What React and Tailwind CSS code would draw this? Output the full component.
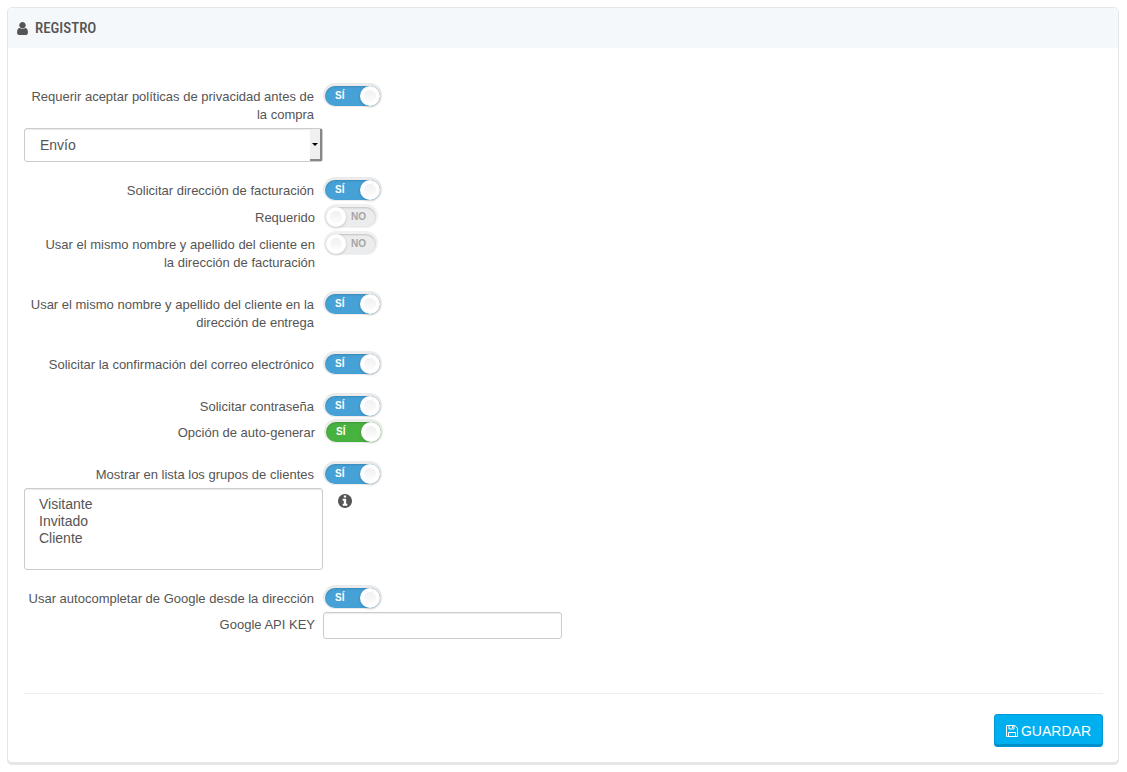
function UserIcon() {
  return (
    <svg viewBox="0 128 1280 1536" className="h-[13px] w-[11px]" fill="currentColor" aria-hidden="true">
      <path d="M1280 1399q0 109-62.5 187t-150.500 78h-854q-88 0-150.500-78t-62.500-187q0-85 8.500-160.500t31.500-152 58.500-131 94-89 134.500-34.500q131 128 313 128t313-128q76 0 134.500 34.500t94 89 58.500 131 31.500 152 8.500 160.500zm-256-887q0 159-112.500 271.500t-271.500 112.500-271.500-112.500-112.500-271.500 112.500-271.500 271.500-112.500 271.500 112.500 112.500 271.500z" />
    </svg>
  );
}

function InfoIcon() {
  return (
    <svg viewBox="128 128 1536 1536" className="mt-1.5 size-3.5" fill="currentColor" aria-hidden="true">
      <path d="M1152 1376v-160q0-14-9-23t-23-9h-96v-512q0-14-9-23t-23-9h-320q-14 0-23 9t-9 23v160q0 14 9 23t23 9h96v320h-96q-14 0-23 9t-9 23v160q0 14 9 23t23 9h448q14 0 23-9t9-23zm-128-896v-160q0-14-9-23t-23-9h-192q-14 0-23 9t-9 23v160q0 14 9 23t23 9h192q14 0 23-9t9-23zm640 416q0 209-103 385.500t-279.500 279.500-385.500 103-385.500-103-279.500-279.500-103-385.500 103-385.500 279.500-279.500 385.500-103 385.500 103 279.500 279.500 103 385.500z" />
    </svg>
  );
}

function SaveIcon() {
  return (
    <svg viewBox="0 0 12 12" className="size-3" fill="none" stroke="currentColor" aria-hidden="true">
      <path d="M.5.5h8.300l2.700 2.700v8.300H.5z" />
      <path d="M3 .5v3.500h5V.5M2.500 11.500v-4h7v4" />
      <path d="M6.500 1v2" />
    </svg>
  );
}

function Knob({ side }) {
  return (
    <span
      className={`absolute top-0 flex size-5 items-center justify-center rounded-full bg-white shadow-[0_1px_3px_rgba(0,0,0,0.18)] ${side}`}
    >
      <span className="size-3 rounded-full bg-linear-to-b from-[#f0f0f0] to-[#fcfcfc]" />
    </span>
  );
}

function Toggle({ id, on, color = "bg-[#45a1d6]" }) {
  if (!on) {
    return (
      <span className="relative flex h-5 w-[50px] items-center justify-end rounded-full bg-[#ebeced] pr-2.5 shadow-[inset_0_1px_2px_rgba(0,0,0,0.18),0_-1px_0_2px_#f1f1f1]">
        <input id={id} type="checkbox" role="switch" className="absolute inset-0 z-10 m-0 h-full w-full opacity-0" />
        <span className="text-[10px] leading-4 font-bold text-[#a5a5a5]">NO</span>
        <Knob side="left-0" />
      </span>
    );
  }
  return (
    <span
      className={`relative flex h-5 w-[55px] items-center rounded-full pl-2.5 shadow-[inset_0_1px_2px_rgba(0,0,0,0.15),0_-1px_0_2px_#ebebeb] ${color}`}
    >
      <input id={id} type="checkbox" role="switch" defaultChecked className="absolute inset-0 z-10 m-0 h-full w-full opacity-0" />
      <span className="text-[10px] leading-4 font-bold text-white">SÍ</span>
      <Knob side="right-0" />
    </span>
  );
}

function SwitchRow({ id, label, sub, on, color }) {
  return (
    <div className="flex items-start">
      <span className={`mr-[11px] flex shrink-0 justify-end ${sub ? "w-[291px]" : "w-[290px]"}`}>
        <label
          htmlFor={id}
          className={`py-1 text-right text-[13px] leading-[18px] ${sub ? "max-w-[275px]" : ""}`}
        >
          {label}
        </label>
      </span>
      <span className="py-[2px]">
        <Toggle id={id} on={on} color={color} />
      </span>
    </div>
  );
}

export default function App() {
  return (
    <main className="p-[7px] pr-2 font-['Liberation_Sans',Arial,sans-serif] text-[#555555]">
      <section className="rounded-[5px] border border-[#e6e6e6] bg-white shadow-[0_2px_0_#e6e6e6]">
        <header className="flex h-10 items-center gap-[7px] rounded-t-[5px] bg-[#f5f8fb] pl-[9px]">
          <UserIcon />
          <h1 className="font-['Liberation_Sans_Narrow','Roboto_Condensed','Open_Sans_Condensed',sans-serif] text-[15px] leading-5 font-medium">
            REGISTRO
          </h1>
        </header>
        <form className="pt-9 pr-[15px] pb-[15px] pl-4" onSubmit={(e) => e.preventDefault()}>
          <div className="flex flex-col gap-4">
            <div>
              <SwitchRow id="privacy" on label="Requerir aceptar políticas de privacidad antes de la compra" />
              <div className="relative w-[299px]">
                <select
                  aria-label="Etapa"
                  className="block h-[34px] w-full appearance-none rounded-[3px] border border-[#cccccc] bg-white pl-[15px] text-sm shadow-[inset_0_1px_1px_rgba(0,0,0,0.08)]"
                >
                  <option>Envío</option>
                </select>
                <span className="pointer-events-none absolute top-px right-px flex h-8 w-3 items-center justify-center border-r-2 border-b-2 border-[#888888] bg-[#f0f0f0]">
                  <svg viewBox="0 0 6 3" className="h-[3px] w-1.5" aria-hidden="true">
                    <path d="M0 0h6L3 3z" fill="#000" />
                  </svg>
                </span>
              </div>
            </div>
            <div className="flex flex-col gap-px">
              <SwitchRow id="billing" on label="Solicitar dirección de facturación" />
              <SwitchRow id="required" sub label="Requerido" />
              <SwitchRow id="same-billing" sub label="Usar el mismo nombre y apellido del cliente en la dirección de facturación" />
            </div>
            <SwitchRow id="same-delivery" on label="Usar el mismo nombre y apellido del cliente en la dirección de entrega" />
            <SwitchRow id="confirm-email" on label="Solicitar la confirmación del correo electrónico" />
            <div>
              <SwitchRow id="password" on label="Solicitar contraseña" />
              <SwitchRow id="autogenerate" sub on color="bg-[#48b23f]" label="Opción de auto-generar" />
            </div>
            <div>
              <SwitchRow id="groups" on label="Mostrar en lista los grupos de clientes" />
              <div className="flex items-start gap-[15px]">
                <select
                  multiple
                  aria-label="Grupos de clientes"
                  className="block h-[82px] w-[299px] overflow-hidden rounded-[3px] border border-[#cccccc] bg-white px-3 py-[7px] text-sm leading-[17px] shadow-[inset_0_1px_1px_rgba(0,0,0,0.08)]"
                >
                  <option className="h-[17px] min-h-0 p-0 px-0.5">Visitante</option>
                  <option className="h-[17px] min-h-0 p-0 px-0.5">Invitado</option>
                  <option className="h-[17px] min-h-0 p-0 px-0.5">Cliente</option>
                </select>
                <InfoIcon />
              </div>
            </div>
            <div>
              <SwitchRow id="google" on label="Usar autocompletar de Google desde la dirección" />
              <div className="flex items-start">
                <label htmlFor="api-key" className="mr-2 w-[291px] shrink-0 py-1 text-right text-[13px] leading-[18px]">
                  Google API KEY
                </label>
                <input
                  id="api-key"
                  type="text"
                  className="h-[27px] w-[239px] rounded-[3px] border border-[#cccccc] bg-white px-2 text-xs shadow-[inset_0_1px_1px_rgba(0,0,0,0.08)]"
                />
              </div>
            </div>
          </div>
          <div className="mt-[54px] flex justify-end border-t border-[#eeeeee] pt-5">
            <button
              type="submit"
              className="flex h-[33px] items-center gap-[3px] rounded-[3px] border border-[#0099d6] bg-[#00aff0] px-[11px] text-sm text-white shadow-[inset_0_-2px_0_#008fc7]"
            >
              <SaveIcon />
              GUARDAR
            </button>
          </div>
        </form>
      </section>
    </main>
  );
}
